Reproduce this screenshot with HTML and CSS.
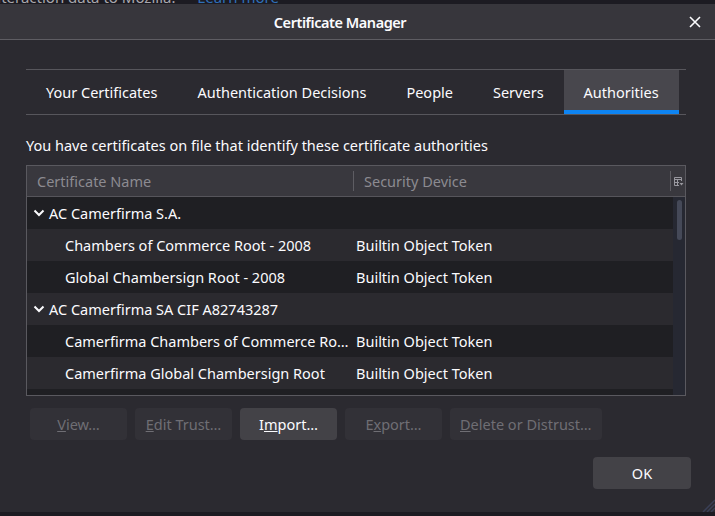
FILE: index.html
```html
<!DOCTYPE html>
<html lang="en">
<head>
<meta charset="utf-8">
<title>Certificate Manager</title>
<link rel="stylesheet" href="styles.css">
</head>
<body>
<div class="bgstrip"><div class="bgtext">interaction data to Mozilla. <span class="learn">Learn more</span></div></div>
<div class="dialog">
  <div class="titlebar">
    <span class="title">Certificate Manager</span>
    <span class="close"><svg width="12" height="12" viewBox="0 0 12 12"><path d="M1 1L11 11M11 1L1 11" stroke="#fbfbfe" stroke-width="1.6" fill="none"/></svg></span>
  </div>
  <div class="content">
    <div class="tabs">
      <div class="tab">Your Certificates</div>
      <div class="tab">Authentication Decisions</div>
      <div class="tab">People</div>
      <div class="tab">Servers</div>
      <div class="tab selected">Authorities</div>
    </div>
    <p class="desc">You have certificates on file that identify these certificate authorities</p>
    <div class="tree">
      <div class="tree-head">
        <div class="th c1">Certificate Name</div>
        <div class="th c2"><span class="sep"></span>Security Device</div>
        <div class="picker"><svg width="11" height="11" viewBox="0 0 11 11"><path d="M1.5 1.5H8.5V5M1.5 1.5V9.5H6M1.5 3.5H8.5M4.5 3.5V9.5M1.5 6.5H6" stroke="#9a99a0" stroke-width="1" fill="none"/><path d="M6.5 7H10.5L8.5 9.5Z" fill="#9a99a0"/></svg></div>
      </div>
      <div class="tree-body">
        <div class="rows">
          <div class="row odd group"><div class="cell c1"><svg class="chev" width="12" height="8" viewBox="0 0 12 8"><path d="M1.5 1.5L6 6L10.5 1.5" stroke="#fbfbfe" stroke-width="2" fill="none"/></svg>AC Camerfirma S.A.</div><div class="cell c2"></div></div>
          <div class="row child"><div class="cell c1">Chambers of Commerce Root - 2008</div><div class="cell c2">Builtin Object Token</div></div>
          <div class="row odd child"><div class="cell c1">Global Chambersign Root - 2008</div><div class="cell c2">Builtin Object Token</div></div>
          <div class="row group"><div class="cell c1"><svg class="chev" width="12" height="8" viewBox="0 0 12 8"><path d="M1.5 1.5L6 6L10.5 1.5" stroke="#fbfbfe" stroke-width="2" fill="none"/></svg>AC Camerfirma SA CIF A82743287</div><div class="cell c2"></div></div>
          <div class="row odd child"><div class="cell c1">Camerfirma Chambers of Commerce Root - 2008</div><div class="cell c2">Builtin Object Token</div></div>
          <div class="row child"><div class="cell c1">Camerfirma Global Chambersign Root</div><div class="cell c2">Builtin Object Token</div></div>
          <div class="row odd child"><div class="cell c1">Chambers of Commerce Root</div><div class="cell c2">Builtin Object Token</div></div>
        </div>
        <div class="scrollbar"><div class="thumb"></div></div>
      </div>
    </div>
    <div class="actions">
      <button class="btn" disabled><u>V</u>iew…</button>
      <button class="btn" disabled><u>E</u>dit Trust…</button>
      <button class="btn">I<u>m</u>port…</button>
      <button class="btn" disabled>E<u>x</u>port…</button>
      <button class="btn" disabled><u>D</u>elete or Distrust…</button>
    </div>
  </div>
  <div class="footer"><button class="btn ok">OK</button></div>
  <div class="grip"><svg width="14" height="14" viewBox="0 0 14 14"><path d="M14 2L2 14M14 6L6 14M14 10L10 14" stroke="#3a3f55" stroke-width="1.5"/></svg></div>
</div>
</body>
</html>
```
FILE: styles.css
```css
* { box-sizing: border-box; }
html, body { margin: 0; padding: 0; }
body {
  background: #1c1b22;
  font-family: "Noto Sans", "Open Sans", sans-serif;
  font-size: 14.5px;
  color: #fbfbfe;
  width: 715px;
  height: 516px;
  overflow: hidden;
}
.bgstrip { height: 4px; overflow: hidden; }
.bgtext {
  margin-top: -13px;
  margin-left: -12px;
  font-size: 15px;
  line-height: 20px;
  color: #a8a7ad;
  white-space: nowrap;
}
.learn { color: #2f6fb8; margin-left: 18px; }

.dialog {
  position: relative;
  height: 508px;
  background: #2b2a30;
  display: flex;
  flex-direction: column;
}
.titlebar {
  height: 36px;
  background: #37363c;
  border-bottom: 1px solid #5e5d63;
  display: flex;
  align-items: center;
}
.title {
  flex: 1;
  text-align: center;
  font-weight: 600;
  font-size: 14.5px;
  letter-spacing: -0.45px;
  padding-top: 1px;
}
.close {
  width: 35px;
  display: flex;
  justify-content: center;
  padding-right: 6px;
}
.content { padding: 29px 29px 0 26px; }
.tabs {
  display: flex;
  border-top: 1px solid #57565c;
  border-bottom: 1px solid #57565c;
}
.tab {
  height: 44px;
  line-height: 44px;
  padding: 0 20px;
  white-space: nowrap;
}
.tab.selected {
  background: #48474d;
  box-shadow: inset 0 -4px 0 #0e84f2;
}
.desc { margin: 20px 0 10px; line-height: 20px; }
.tree {
  height: 231px;
  border: 1px solid #5a595f;
  display: flex;
  flex-direction: column;
}
.tree-head {
  height: 31px;
  background: #39383e;
  border-bottom: 1px solid #56555b;
  display: flex;
  align-items: center;
  color: #8c8b91;
  flex: none;
}
.th { white-space: nowrap; }
.th.c1 { width: 326px; padding-left: 10px; }
.th.c2 { flex: 1; display: flex; align-items: center; }
.sep {
  width: 1px;
  height: 20px;
  background: #5e5d63;
  margin-right: 10px;
}
.picker {
  width: 15px;
  height: 20px;
  border-left: 1px solid #5e5d63;
  display: flex;
  align-items: center;
  justify-content: flex-end;
  padding-right: 1px;
}
.tree-body { flex: 1; display: flex; overflow: hidden; }
.rows { flex: 1; overflow: hidden; }
.row {
  height: 32px;
  display: flex;
  align-items: center;
  background: #2b2a2f;
}
.row.odd { background: #1f1f23; }
.cell { white-space: nowrap; overflow: hidden; text-overflow: ellipsis; }
.cell.c1 { width: 326px; padding-right: 3px; }
.cell.c2 { flex: 1; padding-left: 3px; }
.row.child .c1 { padding-left: 38px; }
.row.group .c1 { padding-left: 6px; display: flex; align-items: center; }
.chev { margin-right: 4px; flex: none; }
.scrollbar {
  width: 12px;
  background: #262832;
  padding: 3px 0 0 4px;
}
.thumb {
  width: 5px;
  height: 40px;
  border-radius: 3px;
  background: #454958;
}
.actions {
  margin-top: 12px;
  margin-left: 4px;
  display: flex;
  gap: 8px;
}
.btn {
  height: 32px;
  min-width: 97px;
  padding: 0 10px;
  border: none;
  border-radius: 4px;
  background: #434247;
  color: #fbfbfe;
  font-family: inherit;
  font-size: 14.5px;
}
.btn:disabled { background: #323137; color: #6f6e74; }
.footer {
  margin-top: auto;
  padding: 0 24px 23px;
  display: flex;
  justify-content: flex-end;
}
.btn.ok { width: 98px; }
.grip { position: absolute; right: 0; bottom: 0; width: 14px; height: 14px; }
.grip svg { display: block; }
```
